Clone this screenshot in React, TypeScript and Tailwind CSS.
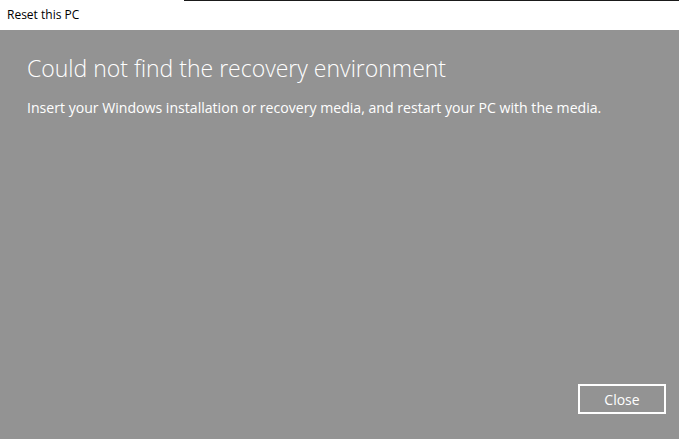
export default function App() {
  return (
    <div className="flex h-[439px] w-[679px] flex-col overflow-hidden bg-[#939393] font-['Open_Sans',sans-serif]">
      <div className="relative flex h-[30px] shrink-0 items-center bg-white pl-[7px] text-[12px] text-black">
        <div className="absolute right-0 top-0 h-px w-[495px] bg-[#1a1a1a]" />
        Reset this PC
      </div>
      <div className="flex flex-1 flex-col pl-[27px] pr-[13px] pt-[22px] pb-[25px] text-white">
        <h1 className="text-[23px] font-light leading-[32px]">Could not find the recovery environment</h1>
        <p className="mt-[14px] text-[14.1px] leading-[20px]">
          Insert your Windows installation or recovery media, and restart your PC with the media.
        </p>
        <div className="mt-auto flex justify-end">
          <button type="button" className="h-[30px] w-[88px] border-2 border-white text-[14px] text-white">
            Close
          </button>
        </div>
      </div>
    </div>
  );
}
